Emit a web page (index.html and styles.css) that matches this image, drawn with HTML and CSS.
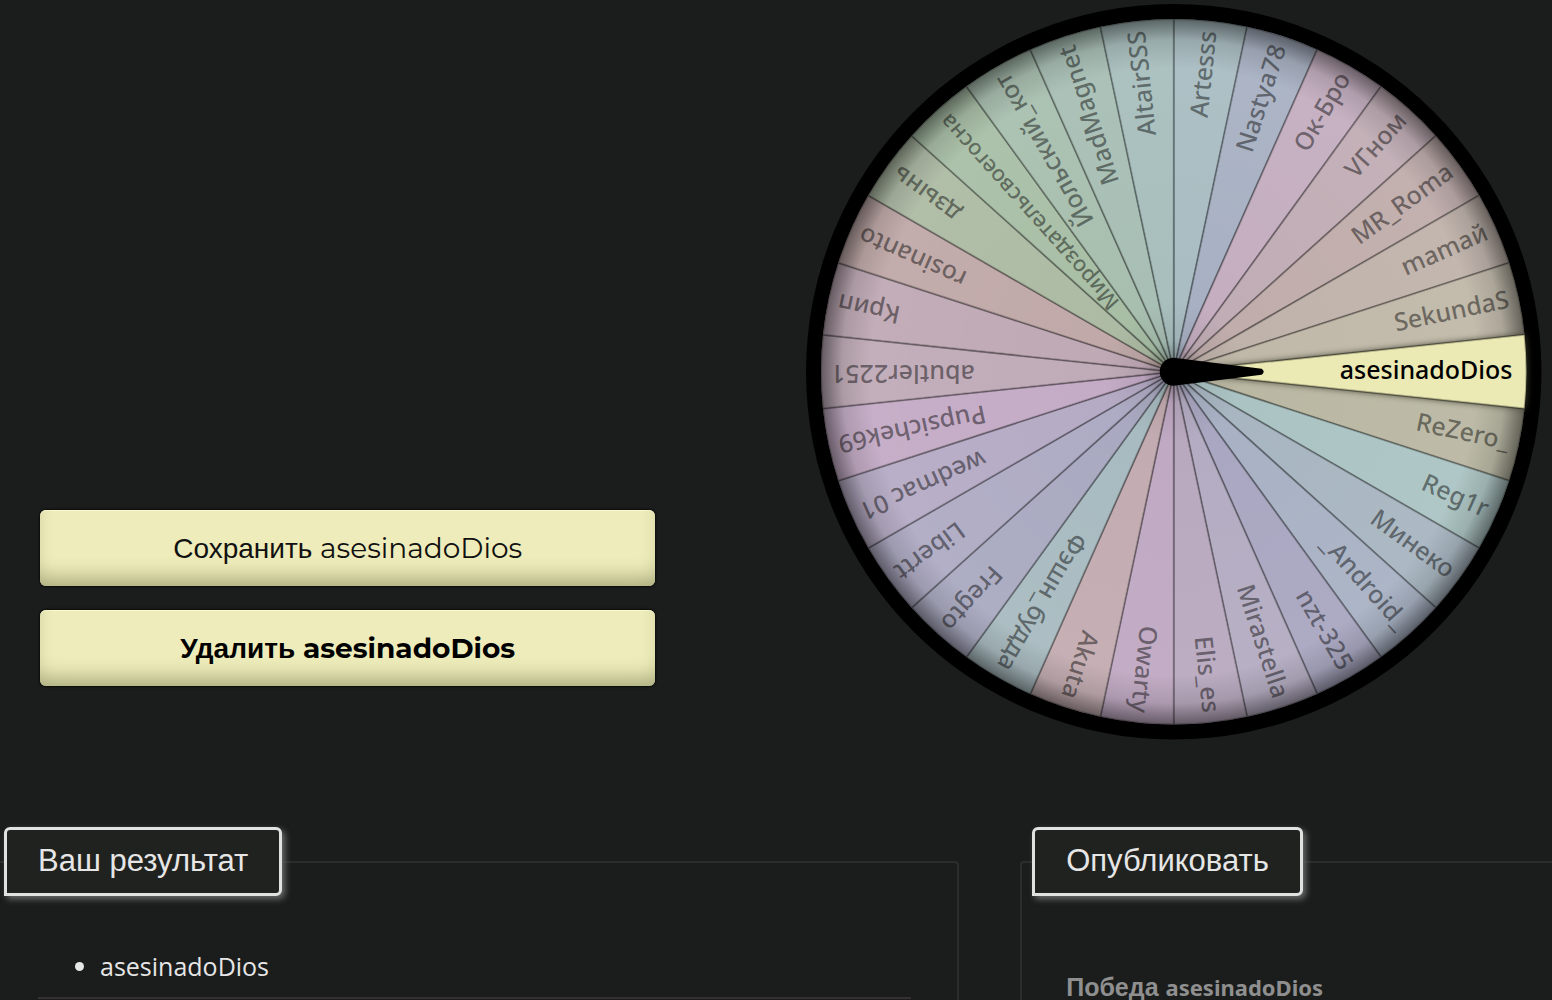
FILE: index.html
```
<!DOCTYPE html>
<html lang="ru">
<head>
    <meta charset="UTF-8">
    <meta name="viewport" content="width=device-width, initial-scale=1.0">
    <title>Колесо</title>
    <link rel="stylesheet" href="styles.css">
</head>
<body>

    <main class="game">
        <div class="actions">
            <button class="btn" type="button">Сохранить <span class="latin">asesinadoDios</span></button>
            <button class="btn btn-strong" type="button">Удалить <span class="latin">asesinadoDios</span></button>
        </div>
        <svg class="wheel" id="wheel" viewBox="-368 -368 736 736">
            <defs>
                <radialGradient id="shade" gradientUnits="userSpaceOnUse" cx="0" cy="0" r="353">
                    <stop offset="0" stop-color="#000" stop-opacity="0.4"/>
                    <stop offset="0.09" stop-color="#000" stop-opacity="0.06"/>
                    <stop offset="0.2" stop-color="#000" stop-opacity="0"/>
                    <stop offset="0.86" stop-color="#000" stop-opacity="0"/>
                    <stop offset="0.94" stop-color="#000" stop-opacity="0.12"/>
                    <stop offset="1" stop-color="#000" stop-opacity="0.48"/>
                </radialGradient>
                <radialGradient id="glow" gradientUnits="userSpaceOnUse" cx="0" cy="0" r="353">
                    <stop offset="0.2" stop-color="#fff" stop-opacity="0"/>
                    <stop offset="0.9" stop-color="#fff" stop-opacity="0.05"/>
                </radialGradient>
            </defs>
            <circle class="ring" r="368"/>
            <g id="sectors"></g>
            <circle r="353" fill="url(#glow)"/>
            <circle r="353" fill="url(#shade)"/>
            <g id="winner"></g>
            <g id="names"></g>
            <path class="arrow" d="M 0 -14 A 14 14 0 1 0 0 14 L 88 3 Q 92 0 88 -3 Z"/>
        </svg>
    </main>

    <section class="panels">
        <fieldset class="panel">
            <legend>Ваш результат</legend>
            <ul class="results">
                <li>asesinadoDios</li>
            </ul>
            <hr class="line">
        </fieldset>
        <fieldset class="panel panel-last">
            <legend>Опубликовать</legend>
            <p class="victory">Победа <span class="latin">asesinadoDios</span></p>
        </fieldset>
    </section>

    <script>
        // по часовой стрелке, начиная с верхней границы
        const players = [
            ['Artesss', '#a9bdc2'], ['Nastya78', '#a8b1c3'], ['Ок-Бро', '#c4aec0'],
            ['VГном', '#c1adb5'], ['MR_Roma', '#c0adac'], ['mamaй', '#c0b3ab'],
            ['SekundaS', '#c0b9a9'], ['asesinadoDios', '#eceab4'], ['ReZero_', '#bab8a3'],
            ['Reg1r', '#abc4c3'], ['Минеко', '#a8b6c1'], ['_Android_', '#a8b2c4'],
            ['nzt-325', '#a9a7c1'], ['Mirastella', '#b4acc2'], ['Elis_es', '#b9a9bf'],
            ['Owarty', '#c0a9c3'], ['Akuta', '#c3acb1'], ['Фэшн_будда', '#a8bbc0'],
            ['Fregto', '#a9aac1'], ['Libertt', '#aeabc4'], ['wedmac 01', '#b6abc5'],
            ['Pupsichek69', '#c4abc6'], ['abutler2251', '#c0abb8'], ['Крип', '#bfa9b5'],
            ['rosinanto', '#c0a9a8'], ['дзынь', '#adbba4'], ['Мироздательсвоегосна', '#a8bfa6'],
            ['Йольский_кот', '#a8bfaf'], ['MadMagnet', '#a8bfb5'], ['AltairSSS', '#a8bfbe']
        ];
        const winner = 7;
        const radius = 353;
        const step = 360 / players.length;

        function point(angle) {
            const rad = angle * Math.PI / 180;
            return (radius * Math.cos(rad)).toFixed(2) + ' ' + (radius * Math.sin(rad)).toFixed(2);
        }

        function add(parentId, tag, attrs, text) {
            const el = document.createElementNS('http://www.w3.org/2000/svg', tag);
            for (const key in attrs) {
                el.setAttribute(key, attrs[key]);
            }
            if (text) {
                el.textContent = text;
            }
            document.getElementById(parentId).appendChild(el);
        }

        players.forEach(function (player, i) {
            const start = -90 + i * step;
            const isWinner = i === winner;
            add(isWinner ? 'winner' : 'sectors', 'path', {
                class: isWinner ? 'sector sector-winner' : 'sector',
                d: `M 0 0 L ${point(start)} A ${radius} ${radius} 0 0 1 ${point(start + step)} Z`,
                fill: player[1]
            });
            let cls = 'name';
            if (isWinner) cls += ' name-winner';
            if (player[0].length > 15) cls += ' name-long';
            add('names', 'text', {
                class: cls,
                x: isWinner ? 339 : 343,
                y: 7,
                transform: `rotate(${start + step / 2})`
            }, player[0]);
        });
    </script>

</body>
</html>
```
FILE: styles.css
```
* {
    box-sizing: border-box;
}
body {
    display: flex;
    flex-direction: column;
    margin: 0;
    height: 100vh;
    overflow: hidden;
    background-color: #1b1d1c;
    color: #e6e6e6;
    font-family: "Open Sans", "Noto Sans", sans-serif;
    font-size: 25px;
}
.game {
    display: flex;
    flex-shrink: 0;
    justify-content: space-between;
    align-items: flex-end;
    padding: 4px 11px 0 40px;
}
.actions {
    display: flex;
    flex-direction: column;
    gap: 24px;
    width: 41%;
    padding-bottom: 53px;
}
.btn {
    height: 76px;
    border: none;
    border-radius: 6px;
    background-color: #eeecbb;
    box-shadow: inset 0 -16px 20px -8px #a9ab7d, inset 0 1px 1px #fbfad2, 0 0 2px 1px #0c0d0a;
    color: #111;
    font-family: "Liberation Sans", sans-serif;
    font-size: 28px;
    cursor: pointer;
}
.btn-strong {
    color: #000;
    font-weight: bold;
}
.btn .latin {
    font-family: Montserrat, "Open Sans", sans-serif;
}
.wheel {
    width: 49%;
    overflow: visible;
}
.ring,
.arrow {
    fill: #000;
}
.sector {
    stroke: #000;
    stroke-opacity: 0.25;
    stroke-width: 2px;
}
.sector-winner {
    filter: drop-shadow(0 0 3px #444433);
}
.name {
    fill: #000;
    fill-opacity: 0.45;
    font-family: "Noto Sans", sans-serif;
    font-size: 25px;
    font-weight: 500;
    text-anchor: end;
}
.name-winner {
    fill-opacity: 1;
}
.name-long {
    font-size: 22px;
}
.panels {
    display: grid;
    grid-template-columns: 62% 1fr;
    flex: 1;
    min-height: 0;
    gap: 61px;
    margin: 88px 0 0 -8px;
}
.panel {
    min-width: 0;
    min-height: 0;
    margin: 0;
    padding: 0 46px 0 10px;
    border: 2px solid #2b2d2c;
    border-bottom: none;
    border-radius: 4px 4px 0 0;
}
.panel-last {
    border-right: none;
    border-top-right-radius: 0;
}
.panel legend {
    height: 69px;
    padding: 0 31px;
    border: 3px solid #e0e2e1;
    border-radius: 6px 6px 6px 0;
    background-color: #20221f;
    box-shadow: 3px 3px 6px #6a6c6b;
    font-family: "Liberation Sans", sans-serif;
    font-size: 31px;
    line-height: 62px;
}
.results {
    margin: 53px 0 14px;
    padding-left: 96px;
    line-height: 34px;
}
.line {
    margin: 0 0 0 34px;
    border: none;
    border-top: 2px solid #353034;
}
.victory {
    margin: 74px 34px 0;
    color: #8f8f8f;
    font-family: "Liberation Sans", sans-serif;
    font-size: 25px;
    font-weight: bold;
    line-height: 34px;
}
.victory .latin {
    font-family: "Noto Sans", sans-serif;
    font-size: 22px;
}
```
